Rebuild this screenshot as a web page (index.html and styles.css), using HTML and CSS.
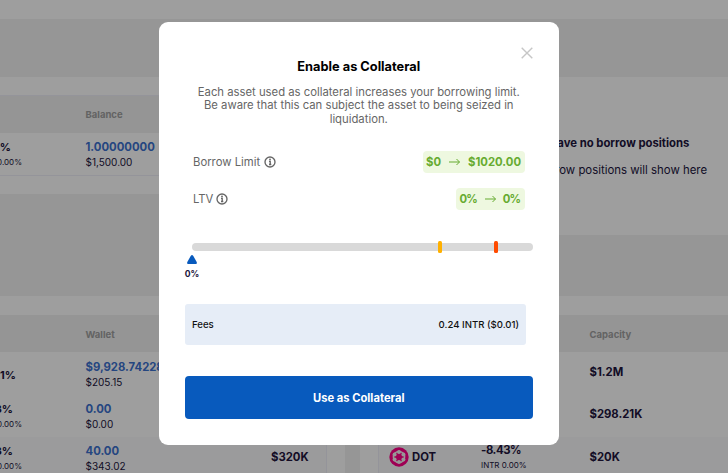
FILE: index.html
```html
<!DOCTYPE html>
<html lang="en">
<head>
<meta charset="utf-8">
<title>Enable as Collateral</title>
<link rel="stylesheet" href="styles.css">
</head>
<body>
<div class="page">
  <div class="top-strip"></div>
  <div class="band"></div>
  <div class="columns">
    <section class="panel supplied">
      <div class="table">
        <div class="head"><span class="rate-col"></span><span>Balance</span></div>
        <div class="row">
          <div class="rate-col"><b>0%</b><small>0.00%</small></div>
          <div class="value"><b>1.00000000</b><span>$1,500.00</span></div>
        </div>
      </div>
    </section>
    <section class="panel empty">
      <b>You have no borrow positions</b>
      <p>Your borrow positions will show here</p>
    </section>
  </div>
  <div class="columns markets">
    <section class="panel">
      <div class="table">
        <div class="head"><span class="rate-col"></span><span>Wallet</span></div>
        <div class="row first">
          <div class="rate-col single"><b>.21%</b></div>
          <div class="value"><b>$9,928.74228</b><span>$205.15</span></div>
        </div>
        <div class="row">
          <div class="rate-col"><b>.43%</b><small>0.00%</small></div>
          <div class="value"><b>0.00</b><span>$0.00</span></div>
        </div>
        <div class="row tint">
          <div class="rate-col"><b>.43%</b><small>0.00%</small></div>
          <div class="value"><b>40.00</b><span>$343.02</span></div>
          <b class="total">$320K</b>
        </div>
      </div>
    </section>
    <section class="panel">
      <div class="table right">
        <div class="head"><span>Capacity</span></div>
        <div class="row first"><b class="cap">$1.2M</b></div>
        <div class="row"><b class="cap">$298.21K</b></div>
        <div class="row tint">
          <div class="asset">
            <svg width="20" height="20" viewBox="0 0 20 20"><circle cx="10" cy="10" r="9.7" fill="#ff0088"/><g fill="#f4f4f4"><circle cx="10" cy="4.900" r="2"/><circle cx="14.400" cy="7.450" r="2"/><circle cx="14.400" cy="12.550" r="2"/><circle cx="10" cy="15.100" r="2"/><circle cx="5.600" cy="12.550" r="2"/><circle cx="5.600" cy="7.450" r="2"/></g><circle cx="10" cy="10" r="5.600" fill="none" stroke="#f4f4f4" stroke-width="1.500"/></svg>
            <b>DOT</b>
          </div>
          <div class="apy"><b>-8.43%</b><small>INTR 0.00%</small></div>
          <b class="cap">$20K</b>
        </div>
      </div>
    </section>
  </div>
</div>

<div class="overlay">
  <div class="modal">
    <svg class="close" width="12" height="12" viewBox="0 0 12 12"><path d="M.7.7l10.600 10.600M11.300.7L.7 11.300" fill="none" stroke="#c6c6c6" stroke-width="1.4"/></svg>
    <h1>Enable as Collateral</h1>
    <p class="intro">Each asset used as collateral increases your borrowing limit.<br>Be aware that this can subject the asset to being seized in<br>liquidation.</p>
    <div class="metric">
      <span class="label">Borrow Limit</span>
      <svg class="info" width="12" height="12" viewBox="0 0 12 12"><circle cx="6" cy="6" r="5" /><path d="M5 5.400h1.200v3M5 8.500h2.300"/><circle class="dot" cx="6" cy="3.500" r=".9"/></svg>
      <span class="pill"><span>$0</span><svg width="11" height="8" viewBox="0 0 11 8"><path d="M0 4h10.500M7.500 1l3 3-3 3"/></svg><span>$1020.00</span></span>
    </div>
    <div class="metric ltv">
      <span class="label">LTV</span>
      <svg class="info" width="12" height="12" viewBox="0 0 12 12"><circle cx="6" cy="6" r="5" /><path d="M5 5.400h1.200v3M5 8.500h2.300"/><circle class="dot" cx="6" cy="3.500" r=".9"/></svg>
      <span class="pill percent"><span>0%</span><svg width="11" height="8" viewBox="0 0 11 8"><path d="M0 4h10.500M7.500 1l3 3-3 3"/></svg><span>0%</span></span>
    </div>
    <div class="track"><i class="mark warn"></i><i class="mark danger"></i></div>
    <div class="pointer">
      <svg width="10" height="9" viewBox="0 0 10 9"><path d="M3.700 1Q5-.8 6.300 1L9.700 7Q10.300 9 9 9H1Q-.3 9 .3 7Z" fill="#085abd"/></svg>
      <span>0%</span>
    </div>
    <div class="fees"><span>Fees</span><span>0.24 INTR ($0.01)</span></div>
    <button class="submit">Use as Collateral</button>
  </div>
</div>
</body>
</html>
```

FILE: styles.css
```css
* { box-sizing: border-box; }
body {
  margin: 0;
  width: 728px;
  height: 473px;
  overflow: hidden;
  font-family: Inter, "Liberation Sans", sans-serif;
  color: #21143d;
}
b { font-weight: 700; }
h1, p { margin: 0; }

.page { height: 473px; overflow: hidden; background: #f2f2f2; }
.top-strip { height: 19px; background: #fff; }
.band { height: 58px; }
.columns { display: grid; grid-template-columns: 345px 496px; gap: 15px; height: 158px; align-items: start; }
.columns.markets { margin-top: 61px; height: 180px; }
.panel { background: #fff; padding: 18px 18px 18px 0; min-width: 0; }
.markets .panel { height: 180px; padding-top: 19px; }
.panel + .panel { padding-left: 18px; }
.supplied { height: 117px; }
.table { border: 1px solid #efeff8; border-left: 0; }
.markets .table { border-top: 0; }
.right { border-left: 1px solid #efeff8; }
.head { display: flex; align-items: center; height: 37px; background: #f0f0f0; color: #a0a0a0; font-size: 9.500px; font-weight: 700; }
.markets .head { padding-top: 1px; }
.rate-col { width: 85.500px; flex: none; display: flex; flex-direction: column; }
.rate-col b, .rate-col small { width: 22px; display: flex; justify-content: flex-end; white-space: nowrap; }
.rate-col b { width: 11px; font-size: 11px; line-height: 15px; }
.rate-col small, .apy small { font-size: 8px; line-height: 14px; }
.row { display: flex; height: 42px; padding-top: 7px; }
.row.first { height: 43px; padding-top: 8px; }
.markets .rate-col b { width: 13px; }
.markets .rate-col.single b { width: 16px; padding-top: 8px; }
.value { display: flex; flex-direction: column; width: 185.500px; white-space: nowrap; font-size: 10px; line-height: 15px; }
.value b { font-size: 11.300px; line-height: 15px; color: #3c71cf; }
.tint { background: #fbfbfc; }
.total, .cap { font-size: 11.300px; line-height: 15px; padding-top: 5px; }
.total { padding-top: 6px; }
.right .head { padding-left: 210.500px; }
.right .row > .cap:first-child { padding-left: 210.500px; }
.right .tint { padding-top: 6px; }
.right .tint .cap { padding-top: 7px; }
.asset { display: flex; gap: 3px; width: 102px; padding-left: 10px; font-size: 11.300px; line-height: 29px; }
.asset svg { margin-top: 4px; }
.apy { display: flex; flex-direction: column; width: 108.500px; font-size: 11.300px; line-height: 15px; }
.apy b { letter-spacing: -.4px; }
.empty { height: 158px; font-size: 11.400px; line-height: 16px; white-space: nowrap; display: flex; flex-direction: column; align-items: center; padding: 58px 0 0; gap: 11px; }
.panel.empty { padding-left: 0; }
.empty b { font-size: 11.300px; }

.overlay { position: fixed; inset: 0; background: rgba(0, 0, 0, .38); padding: 22px 0 0 159px; }
.modal { position: relative; width: 399.500px; height: 423px; background: #fff; border-radius: 9px; padding: 36px 26px 25px; }
.close { position: absolute; right: 25.500px; top: 25px; }
h1 { color: #000; font-size: 12.800px; line-height: 18px; font-weight: 700; text-align: center; }
.intro { margin: 9.600px -1px 0; color: #666; font-size: 11.300px; line-height: 13.600px; text-align: center; white-space: nowrap; }
.metric { display: flex; align-items: center; height: 22px; margin: 24.600px 8px 0; color: #666; font-size: 11.300px; }
.metric.ltv { margin-top: 15px; }
.info { margin-left: 4px; fill: none; stroke: #666; stroke-width: 1.350; }
.ltv .info { margin-left: 3px; }
.info .dot { fill: #666; stroke: none; }
.pill { display: flex; align-items: center; gap: 8px; height: 22px; padding: 0 3.500px; margin-left: auto; border-radius: 4px; background: #eef8e0; color: #67ab30; font-size: 11.300px; font-weight: 700; }
.pill svg { fill: none; stroke: #67ab30; stroke-width: 1; }
.percent span { letter-spacing: -.8px; padding-right: .8px; }
.percent { gap: 7px; }
.track { position: relative; height: 8px; margin: 32.800px 0 0 7px; border-radius: 4px; background: #d9d9d9; }
.mark { position: absolute; top: -2px; width: 4px; height: 12px; border-radius: 1.500px; }
.warn { left: 246px; background: #ffb000; }
.danger { left: 302px; background: #ff4b00; }
.pointer { display: flex; flex-direction: column; align-items: center; width: 14px; height: 25px; margin-top: 4px; font-size: 8.600px; font-weight: 700; line-height: 11px; gap: 5px; }
.pointer svg { flex: none; }
.fees { display: flex; justify-content: space-between; align-items: center; height: 41.500px; width: 341px; margin-top: 24px; padding: 0 7px; border-radius: 3px; background: #e6edf7; color: #111; font-size: 9.600px; font-weight: 500; }
.submit { display: block; width: 100%; height: 43px; margin-top: 31px; border: 0; border-radius: 4px; background: #085abd; color: #fff; font: 700 11.200px Inter, "Liberation Sans", sans-serif; }
```
